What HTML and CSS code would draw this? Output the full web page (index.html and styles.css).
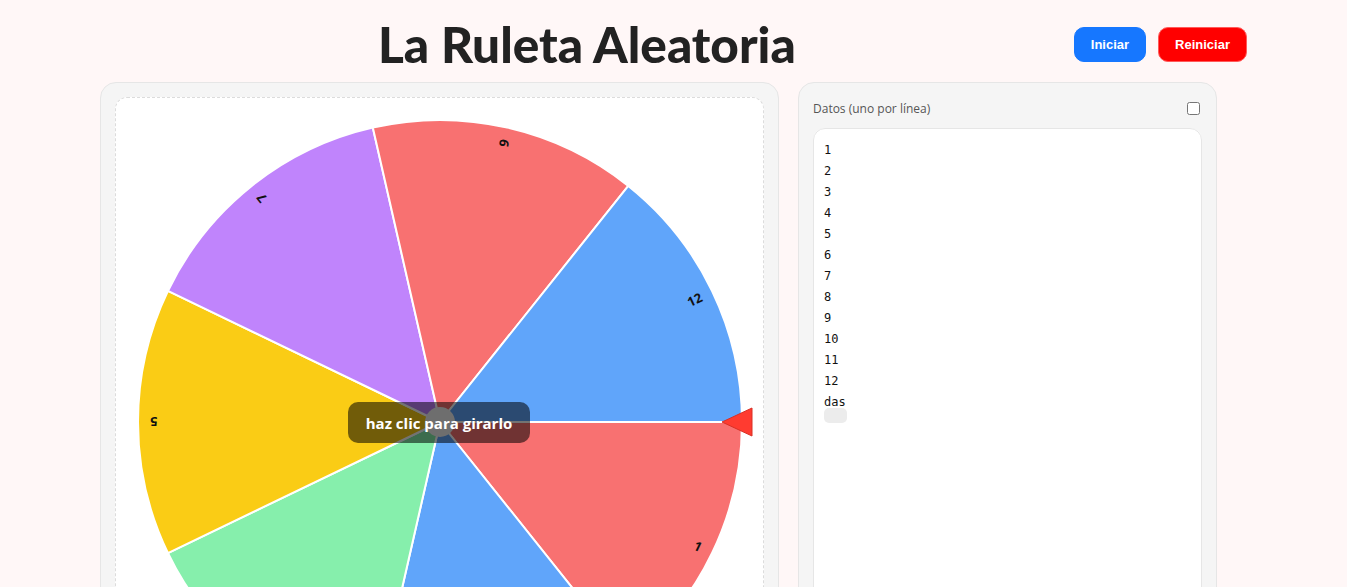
FILE: index.html
```html
<!DOCTYPE html>
<html lang="es">
<head>
<meta charset="utf-8">
<title>La Ruleta Aleatoria</title>
<link rel="stylesheet" href="styles.css">
</head>
<body>
<div class="page">
  <header class="header">
    <h1 class="title">La Ruleta Aleatoria</h1>
    <div class="actions">
      <button class="btn btn-start">Iniciar</button>
      <button class="btn btn-reset">Reiniciar</button>
    </div>
  </header>
  <main class="main">
    <section class="panel wheel-panel">
      <div class="canvas-box">
        <svg class="wheel" width="648" height="650" viewBox="0 0 648 650">
          <g transform="translate(2 0)">
            <g stroke="#ffffff" stroke-width="2" stroke-linejoin="round">
              <path d="M322 324 L624 324 A302 302 0 0 1 510.29 560.11 Z" fill="#f87171"/>
              <path d="M322 324 L510.29 560.11 A302 302 0 0 1 254.80 618.43 Z" fill="#60a5fa"/>
              <path d="M322 324 L254.80 618.43 A302 302 0 0 1 49.91 455.03 Z" fill="#86efac"/>
              <path d="M322 324 L49.91 455.03 A302 302 0 0 1 49.91 192.97 Z" fill="#facc15"/>
              <path d="M322 324 L49.91 192.97 A302 302 0 0 1 254.80 29.57 Z" fill="#c084fc"/>
              <path d="M322 324 L254.80 29.57 A302 302 0 0 1 510.29 87.89 Z" fill="#f87171"/>
              <path d="M322 324 L510.29 87.89 A302 302 0 0 1 624 324 Z" fill="#60a5fa"/>
            </g>
            <g class="labels">
              <text transform="translate(322 324) rotate(25.71)" x="290" text-anchor="end" dominant-baseline="central">1</text>
              <text transform="translate(322 324) rotate(180)" x="290" text-anchor="end" dominant-baseline="central">5</text>
              <text transform="translate(322 324) rotate(231.43)" x="290" text-anchor="end" dominant-baseline="central">7</text>
              <text transform="translate(322 324) rotate(282.86)" x="290" text-anchor="end" dominant-baseline="central">9</text>
              <text transform="translate(322 324) rotate(334.29)" x="290" text-anchor="end" dominant-baseline="central">12</text>
            </g>
            <circle cx="322" cy="324" r="15" fill="#f4f4f4"/>
          </g>
          <polygon points="606,324 636,310 636,338" fill="#ff3b30" stroke="#d93025" stroke-width="1" stroke-linejoin="round"/>
        </svg>
        <div class="spin-hint">haz clic para girarlo</div>
      </div>
    </section>
    <section class="panel data-panel">
      <div class="data-head">
        <label class="data-label" for="datos">Datos (uno por línea)</label>
        <input type="checkbox" class="data-check">
      </div>
      <div class="area-wrap">
        <span class="mark"></span>
        <textarea id="datos" class="data-area" spellcheck="false">1
2
3
4
5
6
7
8
9
10
11
12
das</textarea>
      </div>
    </section>
  </main>
</div>
</body>
</html>
```
FILE: styles.css
```css
html, body {
  margin: 0;
  padding: 0;
  background: #fff7f7;
}

body {
  font-family: "Open Sans", "Liberation Sans", sans-serif;
  color: #222;
}

.page {
  padding: 0 100px;
}

.header {
  display: flex;
  align-items: center;
  height: 82px;
}

.title {
  flex: 1;
  margin: 0;
  text-align: center;
  font-family: Lato, "Open Sans", sans-serif;
  font-weight: 900;
  font-size: 49.5px;
  line-height: 1;
  color: #222;
  padding-top: 8px;
}

.actions {
  display: flex;
  gap: 12px;
  padding-top: 6px;
}

.btn {
  height: 35px;
  padding: 0 16px;
  border-radius: 10px;
  font-family: "Liberation Sans", Arial, sans-serif;
  font-weight: 700;
  font-size: 13px;
  color: #fff;
  cursor: pointer;
}

.btn-start {
  background: #1677ff;
  border: 1px solid #1677ff;
}

.btn-reset {
  background: #ff0000;
  border: 1px solid #ff5a5a;
}

.main {
  display: grid;
  grid-template-columns: 679px 419px;
  column-gap: 19px;
  align-items: stretch;
}

.panel {
  background: #f5f5f5;
  border: 1px solid #e6e6e6;
  border-radius: 16px;
  padding: 14px;
}

.canvas-box {
  position: relative;
  background: #fff;
  border: 1px dashed #dcdcdc;
  border-radius: 12px;
  height: 650px;
}

.wheel {
  display: block;
}

.labels text {
  font-family: "Open Sans", "Liberation Sans", sans-serif;
  font-weight: 700;
  font-size: 13px;
  fill: #111;
}

.spin-hint {
  position: absolute;
  left: 232px;
  top: 304px;
  width: 182px;
  height: 41px;
  display: flex;
  align-items: center;
  justify-content: center;
  background: rgba(0, 0, 0, 0.55);
  border-radius: 10px;
  color: #fff;
  font-family: "Open Sans", "Liberation Sans", sans-serif;
  font-weight: 700;
  font-size: 15px;
}

.data-panel {
  display: flex;
  flex-direction: column;
}

.data-head {
  display: flex;
  align-items: center;
  justify-content: space-between;
  height: 22px;
  margin-bottom: 9px;
}

.data-label {
  font-size: 12px;
  color: #555;
}

.data-check {
  margin: 0 2px 0 0;
  width: 13px;
  height: 13px;
}

.area-wrap {
  position: relative;
  flex: 1;
  display: flex;
}

.area-wrap::before {
  content: "";
  position: absolute;
  inset: 0;
  background: #fff;
  border-radius: 12px;
}

.mark {
  position: absolute;
  z-index: 1;
  left: 11px;
  top: 280px;
  width: 23px;
  height: 15px;
  background: #ececec;
  border-radius: 5px;
}

.data-area {
  position: relative;
  z-index: 2;
  flex: 1;
  box-sizing: border-box;
  min-height: 600px;
  margin: 0;
  padding: 11px 10px 10px;
  border: 1px solid #e6e6e6;
  border-radius: 12px;
  background: transparent;
  font-family: "DejaVu Sans Mono", "Liberation Mono", monospace;
  font-size: 12px;
  line-height: 21px;
  color: #111;
  resize: none;
  outline: none;
}
```
